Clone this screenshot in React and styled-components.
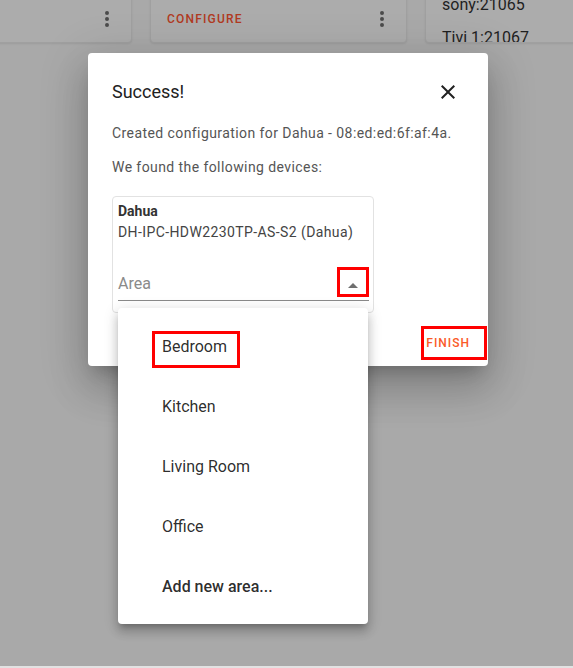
import React from "react";
import styled, { createGlobalStyle } from "styled-components";

const Global = createGlobalStyle`
  html { background: #e2e2e2; }
  body { margin: 0; font-family: Roboto, "Noto Sans", Arial, sans-serif; }
  * { box-sizing: border-box; }
`;

const Page = styled.div`
  position: relative;
  height: 666px;
  background: #a9a9a9;
  overflow: hidden;
`;

const CardRow = styled.div`
  display: flex;
  gap: 18px;
  margin-top: -57px;
  margin-left: -125px;
`;

const BgCard = styled.div`
  flex: 0 0 257px;
  height: 100px;
  background: #acacac;
  border: 1px solid #a0a0a0;
  border-radius: 4px;
  box-shadow: 0 1px 2px rgba(0, 0, 0, 0.08);
  display: flex;
  flex-direction: column;
  justify-content: ${(p) => (p.$text ? "flex-start" : "flex-end")};
  overflow: hidden;
`;

const CardActions = styled.div`
  height: 46px;
  display: flex;
  align-items: center;
  justify-content: ${(p) => (p.$single ? "flex-end" : "space-between")};
  padding-left: 16px;
  padding-right: 0;
`;

const ConfigureLabel = styled.span`
  font-size: 12px;
  font-weight: 500;
  letter-spacing: 1.2px;
  color: #b13a22;
  text-transform: uppercase;
`;

const IconBox = styled.span`
  width: ${(p) => p.$w || 48}px;
  height: 24px;
  display: flex;
  align-items: center;
  justify-content: center;
  color: ${(p) => p.$color || "#4b4b4b"};
`;

const CardLines = styled.div`
  padding-top: 44px;
  padding-left: 16px;
  font-size: 16px;
  line-height: 33px;
  color: #1f1f1f;
`;

const Dialog = styled.div`
  position: absolute;
  left: 88px;
  top: 53px;
  width: 400px;
  background: #fff;
  border-radius: 4px;
  box-shadow: 0 11px 15px -7px rgba(0, 0, 0, 0.2), 0 24px 38px 3px rgba(0, 0, 0, 0.14),
    0 9px 46px 8px rgba(0, 0, 0, 0.12);
`;

const Header = styled.div`
  display: flex;
  align-items: center;
  justify-content: space-between;
  padding: 27px 28px 0 24px;
`;

const Title = styled.h2`
  margin: 0;
  font-size: 18px;
  font-weight: 400;
  line-height: 24px;
  color: #212121;
`;

const Content = styled.div`
  padding: 19px 24px 0 24px;
`;

const Para = styled.p`
  margin: 0 0 ${(p) => p.$mb || 0}px;
  font-size: 14px;
  line-height: 20px;
  letter-spacing: 0.42px;
  color: #555;
`;

const DeviceCard = styled.div`
  width: 262px;
  border: 1px solid #e2e2e2;
  border-radius: 4px;
  padding: 4px 4px 11px 5px;
`;

const DeviceName = styled.div`
  font-size: 14px;
  line-height: 20px;
  font-weight: 700;
  color: #333;
`;

const DeviceModel = styled.div`
  margin-top: 1px;
  font-size: 14px;
  line-height: 20px;
  letter-spacing: 0.4px;
  color: #444;
  white-space: nowrap;
`;

const SelectWrap = styled.div`
  position: relative;
  margin-top: 26px;
`;

const SelectRow = styled.div`
  height: 33px;
  display: flex;
  align-items: flex-start;
  justify-content: space-between;
  border-bottom: 1px solid #8a8a8a;
`;

const SelectLabel = styled.span`
  font-size: 16px;
  line-height: 32px;
  color: #8a8a8a;
`;

const Marker = styled.span`
  border: 3px solid #ff0000;
`;

const ArrowMark = styled(Marker)`
  width: 32px;
  height: 30px;
  margin-top: -1px;
  display: flex;
`;

const Menu = styled.ul`
  position: absolute;
  top: calc(100% + 7px);
  left: 0;
  width: 250px;
  margin: 0;
  padding: 8px 0;
  list-style: none;
  background: #fff;
  border-radius: 4px;
  box-shadow: 0 5px 5px -3px rgba(0, 0, 0, 0.2), 0 8px 10px 1px rgba(0, 0, 0, 0.14),
    0 3px 14px 2px rgba(0, 0, 0, 0.12);
  z-index: 2;
`;

const MenuItem = styled.li`
  height: 60px;
  padding-top: ${(p) => (p.$marked ? 15 : 19)}px;
  padding-left: ${(p) => (p.$marked ? 34 : 44)}px;
  font-size: 16px;
  line-height: 24px;
  font-weight: ${(p) => (p.$strong ? 500 : 400)};
  color: rgba(0, 0, 0, 0.84);
`;

const ItemMark = styled(Marker)`
  display: inline-block;
  padding: 1px 10px 6px 7px;
`;

const Actions = styled.div`
  display: flex;
  justify-content: flex-end;
  padding: 13px 1px 6px 0;
`;

const FinishMark = styled(Marker)`
  height: 34px;
  display: flex;
  align-items: center;
  padding: 0 14px 0 2px;
`;

const FinishLabel = styled.span`
  font-size: 12px;
  font-weight: 500;
  letter-spacing: 1px;
  color: #fa5a28;
`;

const Kebab = () => (
  <IconBox>
    <svg width="24" height="24" viewBox="0 0 24 24" fill="currentColor">
      <path d="M12,16A2,2 0 0,1 14,18A2,2 0 0,1 12,20A2,2 0 0,1 10,18A2,2 0 0,1 12,16M12,10A2,2 0 0,1 14,12A2,2 0 0,1 12,14A2,2 0 0,1 10,12A2,2 0 0,1 12,10M12,4A2,2 0 0,1 14,6A2,2 0 0,1 12,8A2,2 0 0,1 10,6A2,2 0 0,1 12,4Z" />
    </svg>
  </IconBox>
);

const areas = ["Bedroom", "Kitchen", "Living Room", "Office"];

export default function App() {
  return (
    <>
      <Global />
      <Page>
        <CardRow>
          <BgCard>
            <CardActions $single>
              <Kebab />
            </CardActions>
          </BgCard>
          <BgCard>
            <CardActions>
              <ConfigureLabel>Configure</ConfigureLabel>
              <Kebab />
            </CardActions>
          </BgCard>
          <BgCard $text>
            <CardLines>
              <div>sony:21065</div>
              <div>Tivi 1:21067</div>
            </CardLines>
          </BgCard>
        </CardRow>

        <Dialog>
          <Header>
            <Title>Success!</Title>
            <IconBox $w={24} $color="#212121">
              <svg width="24" height="24" viewBox="0 0 24 24" fill="currentColor">
                <path d="M19,6.41L17.59,5L12,10.59L6.41,5L5,6.41L10.59,12L5,17.59L6.41,19L12,13.41L17.59,19L19,17.59L13.41,12L19,6.41Z" />
              </svg>
            </IconBox>
          </Header>
          <Content>
            <Para $mb={14}>Created configuration for Dahua - 08:ed:ed:6f:af:4a.</Para>
            <Para $mb={19}>We found the following devices:</Para>
            <DeviceCard>
              <DeviceName>Dahua</DeviceName>
              <DeviceModel>DH-IPC-HDW2230TP-AS-S2 (Dahua)</DeviceModel>
              <SelectWrap>
                <SelectRow>
                  <SelectLabel>Area</SelectLabel>
                  <ArrowMark>
                    <svg width="26" height="24" viewBox="0 0 26 24">
                      <path d="M8,18L13,13L18,18Z" fill="#6f6f6f" />
                    </svg>
                  </ArrowMark>
                </SelectRow>
                <Menu>
                  {areas.map((a, i) => (
                    <MenuItem key={a} $marked={i === 0}>
                      {i === 0 ? <ItemMark>{a}</ItemMark> : a}
                    </MenuItem>
                  ))}
                  <MenuItem $strong>Add new area...</MenuItem>
                </Menu>
              </SelectWrap>
            </DeviceCard>
          </Content>
          <Actions>
            <FinishMark>
              <FinishLabel>FINISH</FinishLabel>
            </FinishMark>
          </Actions>
        </Dialog>
      </Page>
    </>
  );
}
